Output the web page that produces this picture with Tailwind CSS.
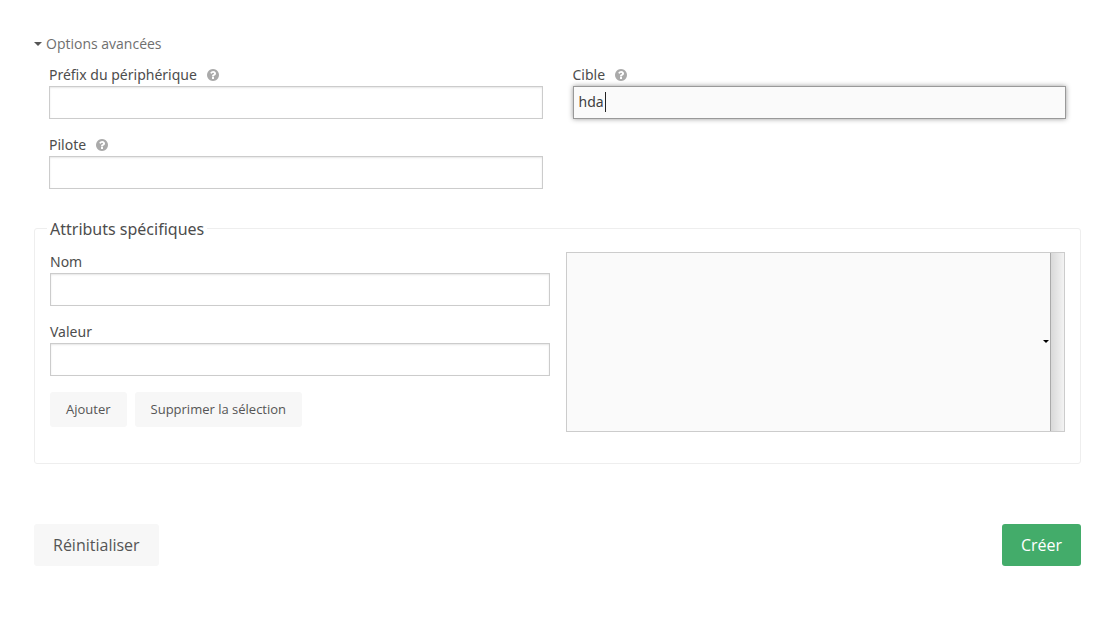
<!DOCTYPE html>
<html lang="fr">
<head>
<meta charset="utf-8">
<meta name="viewport" content="width=device-width, initial-scale=1">
<title>Options avancées</title>
<script src="https://cdn.jsdelivr.net/npm/@tailwindcss/browser@4"></script>
</head>
<body class="bg-white font-['Open_Sans','Noto_Sans',sans-serif] text-sm text-[#4d4d4d]">
<svg class="hidden" aria-hidden="true">
  <symbol id="help" viewBox="0 0 1536 1536"><path transform="translate(0 -128)" d="M896 1376v-192q0-14-9-23t-23-9h-192q-14 0-23 9t-9 23v192q0 14 9 23t23 9h192q14 0 23-9t9-23zm256-672q0-88-55.5-163t-138.5-116-170-41q-243 0-371 213-15 24 8 42l132 100q7 6 19 6 16 0 25-12 53-68 86-92 34-24 86-24 48 0 85.5 26t37.5 59q0 38-20 61t-68 45q-63 28-115.5 86.5t-52.5 125.5v36q0 14 9 23t23 9h192q14 0 23-9t9-23q0-19 21.5-49.5t54.5-49.5q32-18 49-28.5t46-35 44.5-48 28-60.5 12.5-81zm384 192q0 209-103 385.5t-279.5 279.5-385.5 103-385.5-103-279.5-279.5-103-385.5 103-385.5 279.5-279.5 385.5-103 385.5 103 279.5 279.5 103 385.5z"/></symbol>
</svg>
<form class="pt-[33px] pr-[33px] pb-8 pl-[34px]">
  <details open>
    <summary class="flex h-[21px] cursor-pointer list-none items-center gap-1 text-[#6f6f6f]">
      <svg class="h-1 w-2 fill-[#555]" viewBox="0 0 8 4" aria-hidden="true"><path d="M0 0h8L4 4z"/></svg>
      Options avancées
    </summary>
    <div class="grid grid-cols-2 gap-x-[30px] gap-y-4 px-[15px] pt-[10px]">
      <div>
        <label for="prefix" class="flex h-[22px] items-center gap-[10px] pb-px font-['Noto_Sans','Open_Sans',sans-serif]">Préfix du périphérique
          <svg class="size-3 fill-[#aaa]" aria-hidden="true"><use href="#help"/></svg></label>
        <input id="prefix" type="text" class="block h-[33px] w-full border border-[#ccc] px-[5px] shadow-[inset_0_1px_2px_rgba(0,0,0,0.1)] outline-none">
      </div>
      <div>
        <label for="target" class="flex h-[22px] items-center gap-[10px] pb-px font-['Noto_Sans','Open_Sans',sans-serif]">Cible
          <svg class="size-3 fill-[#aaa]" aria-hidden="true"><use href="#help"/></svg></label>
        <div class="relative">
          <input id="target" type="text" value="hda" class="block h-[33px] w-full border border-[#999] bg-[#fafafa] px-[5px] pb-[2px] font-['Noto_Sans','Open_Sans',sans-serif] text-[#404040] shadow-[0_0_5px_#999] outline-none">
          <span class="absolute top-[6px] left-8 h-5 w-px bg-[#222]"></span>
        </div>
      </div>
      <div class="-mt-px">
        <label for="driver" class="flex h-[22px] items-center gap-[10px] pb-px font-['Noto_Sans','Open_Sans',sans-serif]">Pilote
          <svg class="size-3 fill-[#aaa]" aria-hidden="true"><use href="#help"/></svg></label>
        <input id="driver" type="text" class="block h-[33px] w-full border border-[#ccc] px-[5px] shadow-[inset_0_1px_2px_rgba(0,0,0,0.1)] outline-none">
      </div>
    </div>
  </details>

  <fieldset class="mt-[27px] rounded-[3px] border border-[#eee] px-[15px] pb-[31px]">
    <legend class="-ml-[3px] px-[3px] pt-px font-['Noto_Sans','Open_Sans',sans-serif] text-base leading-6">Attributs spécifiques</legend>
    <div class="grid grid-cols-2 gap-4 pt-[11px]">
      <div>
        <label for="name" class="flex h-[21px] items-center pb-px font-['Noto_Sans','Open_Sans',sans-serif]">Nom</label>
        <input id="name" type="text" class="block h-[33px] w-full border border-[#ccc] px-[5px] shadow-[inset_0_1px_2px_rgba(0,0,0,0.1)] outline-none">
        <label for="value" class="mt-4 flex h-[21px] items-center pb-px font-['Noto_Sans','Open_Sans',sans-serif]">Valeur</label>
        <input id="value" type="text" class="block h-[33px] w-full border border-[#ccc] px-[5px] shadow-[inset_0_1px_2px_rgba(0,0,0,0.1)] outline-none">
        <div class="mt-4 flex gap-2 text-[13px] text-[#555]">
          <button type="button" class="h-[35px] rounded-[3px] bg-[#f7f7f7] px-4">Ajouter</button>
          <button type="button" class="h-[35px] rounded-[3px] bg-[#f7f7f7] px-4">Supprimer la sélection</button>
        </div>
      </div>
      <div class="flex h-[180px] border border-[#ccc] bg-[#fafafa]">
        <div class="relative flex-1">
          <select size="8" aria-label="Attributs" class="block h-full w-full appearance-none bg-[#fafafa] outline-none"></select>
          <svg class="pointer-events-none absolute top-[87px] right-px h-[3px] w-[6px] fill-black" viewBox="0 0 6 3" aria-hidden="true"><path d="M0 0h6L3 3z"/></svg>
        </div>
        <div class="w-[14px] border-l border-[#aaa] bg-linear-to-r from-[#d9d9d9] to-[#f3f3f3]"></div>
      </div>
    </div>
  </fieldset>

  <div class="mt-[60px] flex justify-between text-base">
    <button type="reset" class="h-[42px] rounded-[3px] bg-[#f7f7f7] px-[19px] text-[#555]">Réinitialiser</button>
    <button type="submit" class="h-[42px] rounded-[3px] bg-[#43ac6a] px-[19px] text-white">Créer</button>
  </div>
</form>
</body>
</html>
